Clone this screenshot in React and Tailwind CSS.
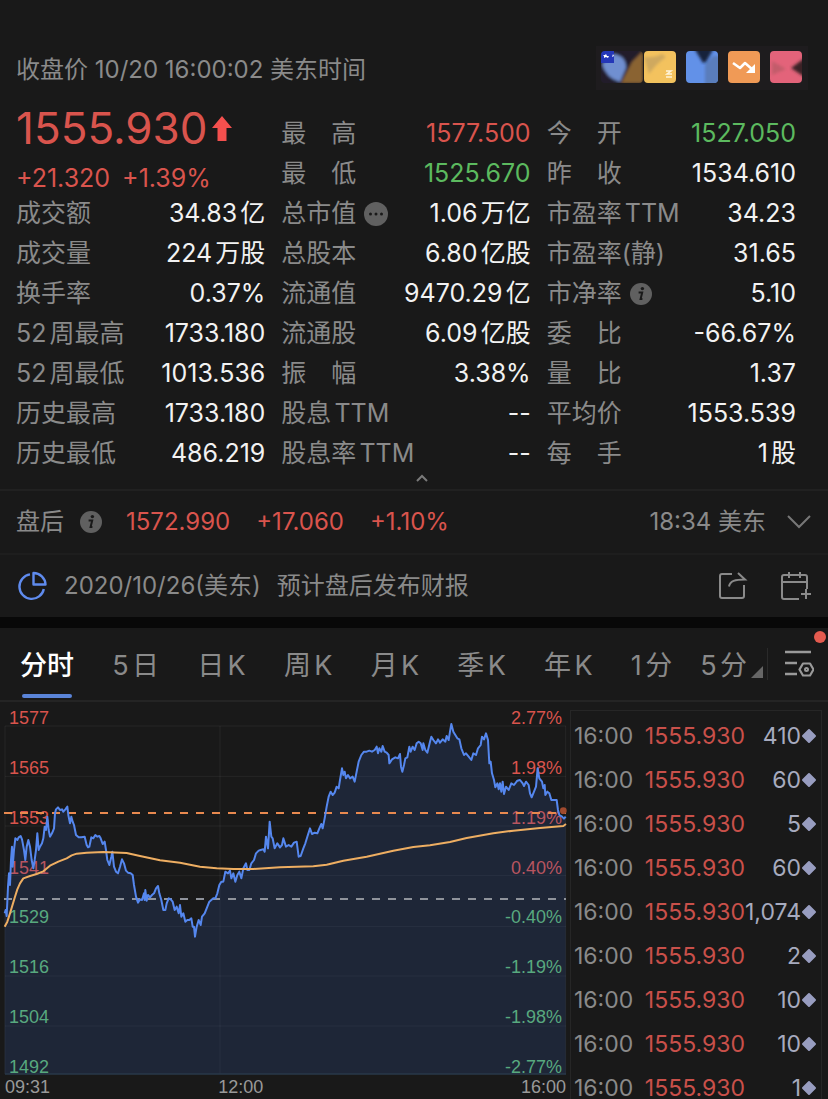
import React from "react";
import clsx from "clsx";

const dayStats = [
  { label: "成交额", value: "34.83亿" },
  { label: "成交量", value: "224万股" },
  { label: "换手率", value: "0.37%" },
  { label: "52周最高", value: "1733.180" },
  { label: "52周最低", value: "1013.536" },
  { label: "历史最高", value: "1733.180" },
  { label: "历史最低", value: "486.219" },
];

const capStats = [
  { label: "最　高", value: "1577.500", tone: "up" },
  { label: "最　低", value: "1525.670", tone: "down" },
  { label: "总市值", value: "1.06万亿", badge: "more" },
  { label: "总股本", value: "6.80亿股" },
  { label: "流通值", value: "9470.29亿" },
  { label: "流通股", value: "6.09亿股" },
  { label: "振　幅", value: "3.38%" },
  { label: "股息TTM", value: "--" },
  { label: "股息率TTM", value: "--" },
];

const ratioStats = [
  { label: "今　开", value: "1527.050", tone: "down" },
  { label: "昨　收", value: "1534.610" },
  { label: "市盈率TTM", value: "34.23" },
  { label: "市盈率(静)", value: "31.65" },
  { label: "市净率", value: "5.10", badge: "info" },
  { label: "委　比", value: "-66.67%" },
  { label: "量　比", value: "1.37" },
  { label: "平均价", value: "1553.539" },
  { label: "每　手", value: "1股" },
];

const tabs = ["分时", "5日", "日K", "周K", "月K", "季K", "年K", "1分"];

const axis = [
  { price: "1577", pct: "2.77%", up: true },
  { price: "1565", pct: "1.98%", up: true },
  { price: "1553", pct: "1.19%", up: true },
  { price: "1541", pct: "0.40%", up: true },
  { price: "1529", pct: "-0.40%", up: false },
  { price: "1516", pct: "-1.19%", up: false },
  { price: "1504", pct: "-1.98%", up: false },
  { price: "1492", pct: "-2.77%", up: false },
];

const volumes = ["410", "60", "5", "60", "1,074", "2", "10", "10", "1"];

const pricePoints =
  "14,640 17,630 20,648 24,560 27,520 30,555 33,480 36,440 38,500 42,450 46,415 52,420 56,412 62,408 66,418 72,450 76,480 80,440 85,420 90,440 95,480 100,505 104,480 108,450 112,400 116,450 120,440 126,430 130,415 134,380 138,390 142,350 146,390 150,410 156,400 162,385 165,340 168,328 174,322 180,330 186,328 190,335 196,328 202,320 205,345 210,370 214,350 218,365 222,375 228,405 236,412 244,412 254,410 260,435 264,442 268,440 274,412 280,415 286,405 292,410 298,408 302,415 308,432 314,425 318,450 322,480 328,495 334,470 337,455 342,500 348,515 354,520 360,500 366,478 372,490 378,512 384,518 392,520 398,525 402,555 408,590 414,608 420,598 426,600 432,580 434,600 436,570 440,602 444,585 450,592 456,585 462,580 468,565 474,558 478,580 484,600 490,630 496,630 500,610 506,595 512,598 518,605 524,630 530,620 536,640 540,615 544,650 550,640 556,665 562,660 568,660 574,655 578,680 582,680 585,710 590,680 596,660 602,675 606,650 614,640 620,625 628,605 634,600 640,595 646,595 652,580 658,555 664,545 670,545 676,515 684,520 690,512 694,535 700,520 706,545 712,525 718,515 724,535 730,505 738,490 742,510 748,510 754,490 762,480 768,460 776,452 782,450 790,448 794,455 798,410 804,445 809,365 814,410 818,415 824,445 832,430 840,442 846,435 850,415 858,440 866,435 874,440 882,428 890,425 896,470 902,468 910,445 916,430 922,410 930,385 936,402 944,398 952,400 958,385 964,372 968,385 974,355 980,320 986,290 992,275 998,285 1004,278 1010,260 1016,265 1020,240 1026,205 1030,225 1034,215 1038,235 1044,225 1050,235 1058,230 1064,245 1070,215 1076,185 1084,165 1092,155 1100,155 1108,152 1116,155 1124,150 1130,140 1134,160 1138,145 1144,155 1148,138 1154,155 1160,158 1166,165 1168,190 1176,178 1186,172 1194,175 1200,162 1203,200 1207,215 1212,195 1216,175 1222,172 1228,140 1232,155 1238,140 1244,150 1250,130 1256,125 1262,130 1268,150 1270,130 1276,150 1282,158 1290,125 1294,110 1300,120 1308,130 1314,118 1320,128 1328,118 1336,125 1340,108 1346,120 1350,95 1354,72 1360,95 1366,105 1372,115 1378,118 1384,145 1392,165 1398,160 1406,170 1414,180 1420,160 1428,165 1434,145 1442,135 1446,110 1452,118 1458,100 1464,120 1468,190 1472,185 1476,220 1482,240 1486,262 1492,250 1496,268 1500,250 1504,275 1508,245 1512,282 1518,260 1526,270 1534,250 1542,255 1552,242 1560,240 1568,250 1572,258 1578,245 1586,255 1590,280 1595,292 1602,275 1608,260 1613,205 1618,235 1626,245 1630,265 1634,255 1636,285 1642,275 1648,280 1654,300 1662,300 1670,300 1674,330 1678,345 1686,350 1692,356 1697,350";

const averagePoints =
  "14,680 22,665 30,640 45,590 52,568 60,550 70,535 90,528 110,522 130,514 150,497 175,485 200,475 215,466 230,461 260,458 310,456 380,459 420,468 480,481 540,488 600,500 650,505 700,507 760,507 840,502 940,499 980,494 1030,482 1100,470 1180,452 1240,441 1290,436 1350,426 1400,414 1480,400 1540,392 1620,384 1690,378 1698,372";

const gridRows = [78, 229, 378, 527, 679, 828, 978];

const InfoIcon = () => (
  <svg viewBox="0 0 22 22" className="size-[22px] shrink-0" aria-hidden="true">
    <circle cx="11" cy="11" r="11" fill="#606060" />
    <circle cx="12.4" cy="5.6" r="1.7" fill="#191919" />
    <path
      d="M8.6 9.4h3.6l-1.6 6.6h1.8"
      fill="none"
      stroke="#191919"
      strokeWidth="2"
    />
  </svg>
);

const MoreIcon = () => (
  <svg viewBox="0 0 24 24" className="size-6 shrink-0" aria-hidden="true">
    <circle cx="12" cy="12" r="12" fill="#606060" />
    <circle cx="6.5" cy="12" r="1.5" fill="#191919" />
    <circle cx="12" cy="12" r="1.5" fill="#191919" />
    <circle cx="17.5" cy="12" r="1.5" fill="#191919" />
  </svg>
);

const StatList = ({ items }) => (
  <dl>
    {items.map((s) => (
      <div
        key={s.label}
        className="flex h-10 items-center justify-between text-[25px] whitespace-nowrap"
      >
        <dt className="flex items-center gap-2 text-[#8a8a8a]">
          {s.label}
          {s.badge === "more" && <MoreIcon />}
          {s.badge === "info" && <InfoIcon />}
        </dt>
        <dd
          className={clsx(
            s.tone === "up" && "text-[#d9544d]",
            s.tone === "down" && "text-[#5cba5f]",
            !s.tone && "text-[#f2f2f2]"
          )}
        >
          {s.value}
        </dd>
      </div>
    ))}
  </dl>
);

const MarketBadges = () => (
  <svg viewBox="0 0 212 44" className="h-11 w-[212px]" aria-hidden="true">
    <defs>
      <filter id="soft">
        <feGaussianBlur stdDeviation="1.5" />
      </filter>
      <clipPath id="tiles">
        <rect x="5" y="5" width="42" height="32" rx="4" />
        <rect x="48" y="5" width="32" height="32" rx="4" />
        <rect x="90" y="5" width="32" height="32" rx="4" />
        <rect x="132" y="5" width="32" height="32" rx="4" />
        <rect x="174" y="5" width="32" height="32" rx="4" />
      </clipPath>
    </defs>
    <rect width="212" height="44" fill="#1e1c1e" />
    <g clipPath="url(#tiles)">
      <g filter="url(#soft)">
        <rect x="2" y="2" width="45" height="38" fill="#241a2c" />
        <path d="M18 8q12 2 12 14l-6 14q-14-4-18-18z" fill="#6f8fd0" />
        <path d="M47 5L36 16 25 37h22z" fill="#8a6432" />
      </g>
      <rect x="5" y="5" width="13" height="12" fill="#2437b8" />
      <path d="M10 8l1 2h2l-1 2-2-1-2 1v-2l-1-1h2zM17 8l1 2-2 1z" fill="#fff" />
      <rect x="48" y="5" width="32" height="32" fill="#f3c25e" />
      <path
        d="M48 11q10 1 18-3l4 3q-10 7-17 17z"
        fill="#cfa95f"
        filter="url(#soft)"
      />
      <path
        d="M70 25h5l-4 3h5M70 31h6"
        stroke="#fff3d8"
        strokeWidth="1.5"
        fill="none"
      />
      <rect x="90" y="5" width="32" height="32" fill="#6291e8" />
      <path d="M109 18l8-8h8v32h-16z" fill="#5a7dbb" filter="url(#soft)" />
      <path d="M98 2h20l-8 14-3 1z" fill="#15203a" filter="url(#soft)" />
      <rect x="132" y="5" width="32" height="32" fill="#f09a56" />
      <path
        d="M137 17l7 5 5-5 8 7"
        fill="none"
        stroke="#fff"
        strokeWidth="2.5"
        strokeLinejoin="round"
      />
      <path d="M159 18v9h-9z" fill="#fff" />
      <rect x="174" y="5" width="32" height="32" fill="#e3637a" />
      <path d="M176 15l14 8-14 6z" fill="#c25c6b" filter="url(#soft)" />
      <path d="M210 11l-15 11 15 10z" fill="#3a2428" filter="url(#soft)" />
    </g>
  </svg>
);

const PriceChart = () => (
  <svg
    viewBox="15 78 1683 1047"
    preserveAspectRatio="none"
    className="relative block h-[349px] w-full overflow-visible"
    role="img"
    aria-label="分时走势"
  >
    <g stroke="#ffffff" strokeOpacity="0.06" strokeWidth="3">
      {gridRows.map((y) => (
        <path key={y} d={`M15 ${y}H1698`} />
      ))}
      <path d="M15 78V1122M660 78V1122M1697 78V1122" />
    </g>
    <polygon
      points={`14,1122 ${pricePoints} 1697,1122`}
      fill="#325aaf"
      fillOpacity="0.2"
    />
    <path d="M15 1122H1698" stroke="#28384a" strokeWidth="4" />
    <path
      d="M12 339H1698"
      stroke="#e8894f"
      strokeWidth="6"
      strokeDasharray="24 24"
    />
    <path
      d="M12 597H1698"
      stroke="#8f939b"
      strokeWidth="6"
      strokeDasharray="24 24"
    />
    <circle cx="1690" cy="332" r="10" fill="#a04a2e" />
    <polyline
      points={pricePoints}
      fill="none"
      stroke="#5587ee"
      strokeWidth="6"
      strokeLinejoin="round"
    />
    <polyline
      points={averagePoints}
      fill="none"
      stroke="#eeae62"
      strokeWidth="6"
      strokeLinejoin="round"
    />
  </svg>
);

const AxisLabels = ({ field, className }) => (
  <div
    className={clsx(
      "absolute inset-y-0 flex flex-col justify-between text-lg leading-4",
      className
    )}
  >
    {axis.map((a) => (
      <span
        key={a[field]}
        className={a.up ? "text-[#d9544d]" : "text-[#62bd74]"}
      >
        {a[field]}
      </span>
    ))}
  </div>
);

const App = () => {
  return (
    <main className="flex h-screen flex-col overflow-hidden bg-[#191919] font-['Inter','Noto_Sans_CJK_SC',sans-serif] text-[#8a8a8a] [text-autospace:normal]">
      {/* Quote header */}
      <header className="flex items-center justify-between pt-[46px] pr-5 pl-4">
        <p className="pt-1 text-2xl">收盘价 10/20 16:00:02 美东时间</p>
        <MarketBadges />
      </header>

      <section className="mt-6 grid grid-cols-3 gap-4 pr-8 pl-4">
        <div>
          <div className="h-20 text-[#d9544d]">
            <div className="flex items-center gap-1 text-[44px] leading-7">
              1555.930
              <svg viewBox="0 0 20 25" className="h-[25px] w-5" aria-hidden="true">
                <path d="M10 0l10 12h-5.5v13h-9V12H0z" fill="#f4504e" />
              </svg>
            </div>
            <p className="mt-5 flex gap-3 text-[25px] leading-8">
              <span>+21.320</span>
              <span>+1.39%</span>
            </p>
          </div>
          <StatList items={dayStats} />
        </div>
        <StatList items={capStats} />
        <StatList items={ratioStats} />
      </section>

      <div className="flex justify-center pl-4">
        <button
          type="button"
          aria-label="收起"
          className="flex h-[15px] items-start"
        >
          <svg viewBox="0 0 12 12" className="size-3">
            <path
              d="M1 7l5-5 5 5"
              fill="none"
              stroke="#7a7a7a"
              strokeWidth="2"
            />
          </svg>
        </button>
      </div>

      {/* After-hours quote */}
      <section className="flex h-16 items-center border-t-2 border-[#212121] px-4 text-2xl">
        <span>盘后</span>
        <span className="ml-4">
          <InfoIcon />
        </span>
        <div className="ml-6 flex gap-[26px] text-[#d9544d]">
          <span>1572.990</span>
          <span>+17.060</span>
          <span>+1.10%</span>
        </div>
        <span className="ml-auto">18:34 美东</span>
        <button type="button" aria-label="展开" className="ml-5">
          <svg viewBox="0 0 26 16" className="block h-4 w-[26px]">
            <path
              d="M2 2l11 11L24 2"
              fill="none"
              stroke="#777"
              strokeWidth="2"
            />
          </svg>
        </button>
      </section>

      {/* Earnings notice */}
      <section className="flex h-16 items-center border-t-2 border-[#1e1e1e] px-4 text-2xl">
        <svg
          viewBox="0 0 32 32"
          className="size-8"
          fill="none"
          stroke="#5f8bee"
          strokeWidth="2.4"
          aria-hidden="true"
        >
          <path d="M14 4.4A12.3 12.3 0 1 0 27.8 19" />
          <path
            d="M17.5 3v11.5H29.5A12 12 0 0 0 17.5 3z"
            strokeLinejoin="round"
          />
        </svg>
        <p className="ml-4">
          2020/10/26(美东)<span className="ml-4">预计盘后发布财报</span>
        </p>
        <button type="button" aria-label="分享" className="ml-auto">
          <svg
            viewBox="0 0 30 30"
            className="block size-[30px]"
            fill="none"
            stroke="#8a8a8a"
            strokeWidth="2"
          >
            <path d="M14 3H4a2 2 0 0 0-2 2v20a2 2 0 0 0 2 2h20a2 2 0 0 0 2-2v-11" />
            <path d="M11 15.5C12 10 17 8.5 27 8.5L20 2" />
          </svg>
        </button>
        <button type="button" aria-label="加入日历" className="ml-8">
          <svg
            viewBox="0 0 32 30"
            className="block h-[30px] w-8"
            fill="none"
            stroke="#8a8a8a"
            strokeWidth="2"
          >
            <path d="M27 18V6a2 2 0 0 0-2-2H4a2 2 0 0 0-2 2v20a2 2 0 0 0 2 2h15M2 11h25M9 1v6M20 1v6M26 18v10M21 23h10" />
          </svg>
        </button>
      </section>

      {/* Period tabs */}
      <nav className="flex h-[85px] items-stretch border-t-[11px] border-b-2 border-t-[#080808] border-b-[#242424] pr-[14px] pl-5 text-[27px] whitespace-nowrap">
        <div className="flex flex-1 justify-between" role="tablist">
          {tabs.map((tab, i) => (
            <button
              key={tab}
              type="button"
              role="tab"
              aria-selected={i === 0}
              className={clsx(
                "relative pt-1",
                i === 0 && "font-medium text-white"
              )}
            >
              {tab}
              {i === 0 && (
                <span className="absolute inset-x-0.5 bottom-0.5 h-1 rounded-full bg-[#5a84d8]" />
              )}
            </button>
          ))}
        </div>
        <button
          type="button"
          aria-haspopup="menu"
          className="ml-7 flex items-center gap-1 pt-1"
        >
          5分
          <svg viewBox="0 0 12 12" className="mt-3 size-3" aria-hidden="true">
            <path d="M12 0v12H0z" fill="#666" />
          </svg>
        </button>
        <div className="ml-1 h-8 self-center border-r border-[#2a2a2a]" />
        <button type="button" aria-label="指标设置" className="relative ml-4">
          <svg
            viewBox="0 0 30 30"
            className="block size-[30px]"
            fill="none"
            stroke="#9a9a9a"
            strokeWidth="2.6"
          >
            <path d="M1 3h26M1 14h12M1 25h12" />
            <path
              d="M19 14.5h7l3.5 6-3.5 6h-7l-3.5-6z"
              strokeLinejoin="round"
              strokeWidth="2.2"
            />
            <circle cx="22.5" cy="20.5" r="1.5" strokeWidth="2" />
          </svg>
          <span className="absolute top-[3px] -right-3 size-3 rounded-full bg-[#e45b4f]" />
        </button>
      </nav>

      <section className="flex min-h-0 flex-1 gap-1 overflow-hidden pr-[6px] pl-[5px]">
        <figure className="min-w-0 flex-1 font-['Liberation_Sans',sans-serif]">
          <div className="relative pt-6">
            <div className="absolute inset-x-0 top-2 bottom-0">
              <AxisLabels field="price" className="left-1" />
              <AxisLabels field="pct" className="right-1 text-right" />
            </div>
            <PriceChart />
          </div>
          <figcaption className="flex text-lg leading-6 text-[#999]">
            <span className="w-[38%]">09:31</span>
            <span>12:00</span>
            <span className="ml-auto">16:00</span>
          </figcaption>
        </figure>

        {/* Trade ticks */}
        <div className="mt-2 w-[252px] border border-b-0 border-[#262626] pt-[3px]">
          <table className="w-full text-[23px] leading-5" aria-label="逐笔成交">
            <tbody>
              {volumes.map((volume, i) => (
                <tr key={i} className="h-11">
                  <td className="w-[72px] pl-[3px]">16:00</td>
                  <td className="w-[102px] text-right text-[#c9504a]">
                    1555.930
                  </td>
                  <td className="pr-1 text-[#a7abbf]">
                    <div className="flex items-center justify-end">
                      {volume}
                      <svg
                        viewBox="0 0 16 16"
                        className="size-4"
                        aria-hidden="true"
                      >
                        <path
                          d="M8 2l6 6-6 6-6-6z"
                          fill="#989dc0"
                          stroke="#989dc0"
                          strokeWidth="2"
                          strokeLinejoin="round"
                        />
                      </svg>
                    </div>
                  </td>
                </tr>
              ))}
            </tbody>
          </table>
        </div>
      </section>
    </main>
  );
};

export default App;
